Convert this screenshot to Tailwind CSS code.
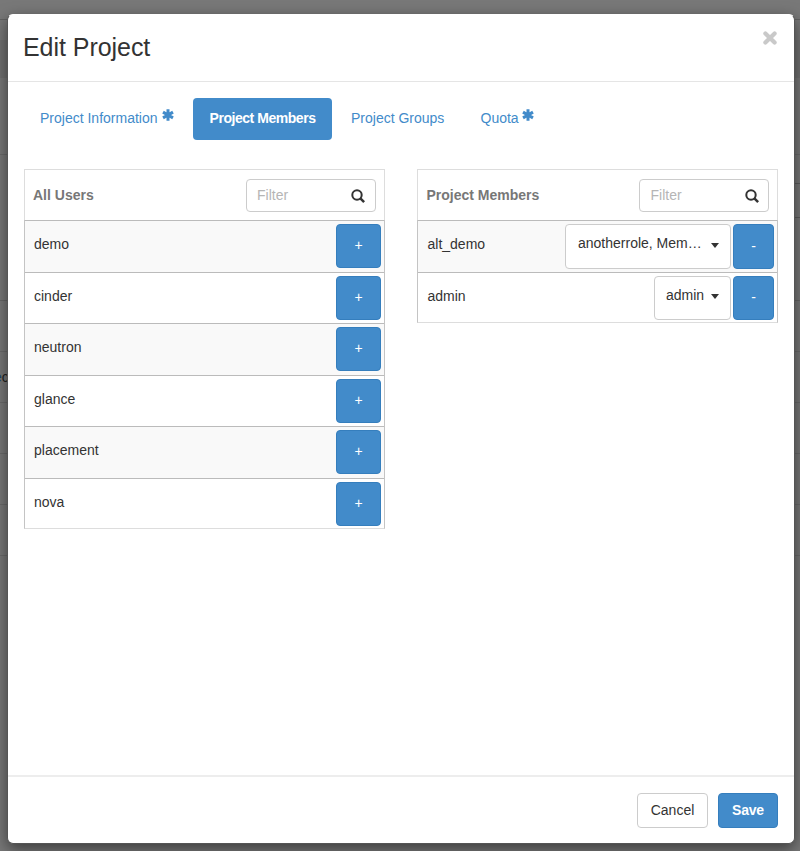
<!DOCTYPE html>
<html lang="en">
<head>
<meta charset="utf-8">
<title>Edit Project</title>
<script src="https://cdn.jsdelivr.net/npm/@tailwindcss/browser@4"></script>
</head>
<body class="w-[800px] h-[851px] overflow-hidden relative bg-[#787878] font-['Liberation_Sans',Arial,sans-serif] text-[14px] leading-5 text-[#333]">
<div id="backdrop" class="absolute inset-0">
  <div class="absolute top-[19px] inset-x-0 h-px bg-[#636363]"></div>
  <div class="absolute top-[40px] inset-x-0 h-[38px] bg-[#707070]"></div>
  <div class="absolute top-[154px] inset-x-0 h-px bg-[#6a6a6a]"></div>
  <div class="absolute top-[183px] right-0 w-3 h-px bg-[#5c5c5c]"></div>
  <div class="absolute top-[217px] right-0 w-3 h-px bg-[#5c5c5c]"></div>
  <div class="absolute top-[300px] inset-x-0 h-px bg-[#666]"></div>
  <div class="absolute top-[351px] inset-x-0 h-px bg-[#6a6a6a]"></div>
  <div class="absolute top-[402px] inset-x-0 h-px bg-[#6a6a6a]"></div>
  <div class="absolute top-[453px] inset-x-0 h-px bg-[#6a6a6a]"></div>
  <div class="absolute top-[504px] inset-x-0 h-px bg-[#6a6a6a]"></div>
  <div class="absolute top-[555px] inset-x-0 h-px bg-[#6a6a6a]"></div>
  <div class="absolute top-[367px] left-[-6px] text-[#1d4468]">e<span class="text-[#222]">c</span></div>
</div>
<main class="absolute left-[7px] top-[14px] w-[788px] h-[830px] bg-white rounded-[6px] border border-[#555] border-t-white shadow-[0_5px_15px_rgba(0,0,0,0.5)] flex flex-col">
  <header class="h-[67px] shrink-0 border-b border-[#e5e5e5] flex justify-between pl-[15px] pr-[17px]">
    <h1 class="text-[25px] leading-[64px] tracking-[-0.05px]">Edit Project</h1>
    <button class="h-[14px] mt-[16px]" aria-label="Close"><svg width="14" height="14" viewBox="0 0 14 14" stroke="#c9c9c9" stroke-width="4.2" stroke-linecap="round"><path d="M2.4 2.4l9.2 9.2M11.6 2.4l-9.2 9.2"/></svg></button>
  </header>
  <section class="grow pl-[16px] pr-[16px] pt-[16px]">
    <nav class="flex h-[42px] text-[#428bca] leading-[40px]">
      <a class="w-[169px] pl-[16px] flex">Project Information<svg class="ml-[4px] mt-[11px]" width="12" height="12" viewBox="0 0 12 12" stroke="#428bca" stroke-width="3" stroke-linecap="butt"><path d="M6 .2v11.6M1 3.1l10 5.8M11 3.1l-10 5.8"/></svg></a>
      <a class="w-[139px] rounded-[4px] bg-[#428bca] text-white font-bold text-center tracking-[-0.46px]">Project Members</a>
      <a class="w-[129px] pl-[19px]">Project Groups</a>
      <a class="pl-[19.5px] flex">Quota<svg class="ml-[3px] mt-[11px]" width="12" height="12" viewBox="0 0 12 12" stroke="#428bca" stroke-width="3" stroke-linecap="butt"><path d="M6 .2v11.6M1 3.1l10 5.8M11 3.1l-10 5.8"/></svg></a>
    </nav>
    <div class="flex justify-between items-start mt-[29px]">
      <div id="users" class="w-[361px]">
        <div class="h-[51px] border border-b-0 border-[#ddd] flex justify-between pl-[8px] pr-[8px] pt-[9px]">
          <b class="text-[#777] leading-[32px]">All Users</b>
          <label class="w-[130px] h-[33px] rounded-[4px] border border-[#ccc] flex justify-between pl-[10px] pr-[10px] text-[#b5b5b5] leading-[30px]">Filter<svg class="mt-[9px]" width="14" height="14" viewBox="0 0 14 14" fill="none" stroke="#333" stroke-width="2"><circle cx="6" cy="6" r="4.7"/><path d="M9.4 9.4l3.7 3.7" stroke-width="2.5"/></svg></label>
        </div>
        <ul id="list" class="border-x border-b border-x-[#c4c4c4] border-b-[#ddd]"></ul>
      </div>
      <div class="w-[361px]">
        <div class="h-[51px] border border-b-0 border-[#ddd] flex justify-between pl-[8.5px] pr-[8px] pt-[9px]">
          <b class="text-[#777] leading-[32px]">Project Members</b>
          <label class="w-[130px] h-[33px] rounded-[4px] border border-[#ccc] flex justify-between pl-[10.5px] pr-[9px] text-[#b5b5b5] leading-[30px]">Filter<svg class="mt-[9px]" width="14" height="14" viewBox="0 0 14 14" fill="none" stroke="#333" stroke-width="2"><circle cx="6" cy="6" r="4.7"/><path d="M9.4 9.4l3.7 3.7" stroke-width="2.5"/></svg></label>
        </div>
        <ul class="border-x border-b border-x-[#c4c4c4] border-b-[#ddd]">
          <li class="h-[52px] border-t border-[#bbb] bg-[#f9f9f9] flex pl-[9.5px] pr-[3px] pt-[3px]"><span class="grow leading-[40px]">alt_demo</span>
            <button class="w-[166px] h-[45px] mr-[2px] rounded-[4px] border border-[#ccc] bg-white flex items-center pl-[12px] pb-[7px] pr-[11px] justify-between">anotherrole, Mem…<i class="mt-[4px] border-x-[4px] border-x-transparent border-t-[5px] border-t-[#333]"></i></button>
            <button class="w-[41px] h-[45px] rounded-[4px] border border-[#357ebd] bg-[#428bca] text-white pb-[2px]">-</button></li>
          <li class="h-[50px] border-t border-[#bbb] flex pl-[9.5px] pr-[3px] pt-[3px]"><span class="grow leading-[40px]">admin</span>
            <button class="w-[77px] h-[44px] mr-[2px] rounded-[4px] border border-[#ccc] bg-white flex items-center pl-[11px] pb-[7px] pr-[11px] justify-between">admin<i class="mt-[4px] border-x-[4px] border-x-transparent border-t-[5px] border-t-[#333]"></i></button>
            <button class="w-[41px] h-[44px] rounded-[4px] border border-[#357ebd] bg-[#428bca] text-white pb-[2px]">-</button></li>
        </ul>
      </div>
    </div>
  </section>
  <footer class="h-[68px] shrink-0 border-t-2 border-[#ededed] flex justify-end gap-[10px] pt-[16px] pr-[16px]">
    <button class="w-[71px] h-[35px] rounded-[4px] border border-[#ccc] pb-[2px]">Cancel</button>
    <button class="w-[60px] h-[35px] rounded-[4px] border border-[#357ebd] bg-[#428bca] text-white font-bold pb-[2px] tracking-[-0.2px]">Save</button>
  </footer>
</main>
<script>
document.getElementById('list').innerHTML = ['demo','cinder','neutron','glance','placement','nova'].map((n,i)=>
`<li class="h-[51.6px] last:h-[50px] border-t border-[#bbb] ${i%2?'bg-white':'bg-[#f9f9f9]'} flex pl-[9px] pr-[3px] pt-[3px]"><span class="grow leading-[40.6px]">${n}</span><button class="w-[45px] h-[44px] rounded-[4px] border border-[#357ebd] bg-[#428bca] text-white pb-[2px]">+</button></li>`).join('');
</script>
</body>
</html>
